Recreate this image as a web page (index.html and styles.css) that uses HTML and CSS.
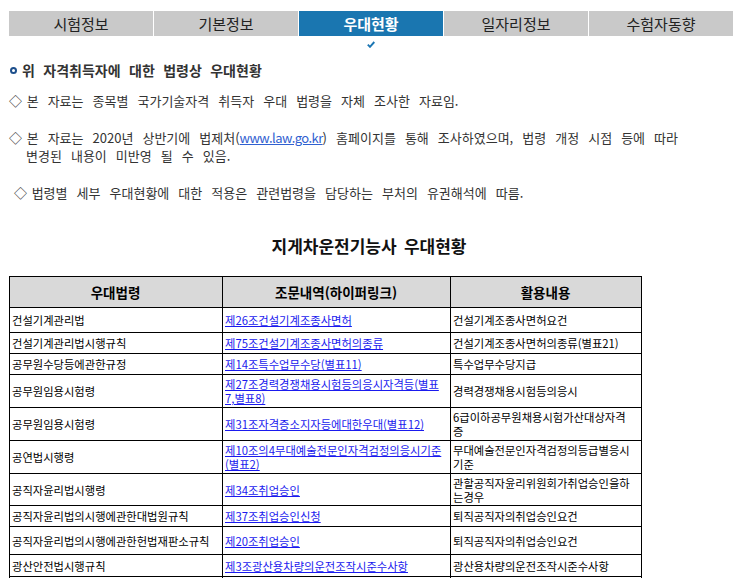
FILE: index.html
```html
<!DOCTYPE html>
<html lang="ko">
<head>
<meta charset="utf-8">
<title>우대현황</title>
<link rel="stylesheet" href="styles.css">
</head>
<body>
<div class="page">
  <nav class="tabs">
    <div class="tab">시험정보</div>
    <div class="tab">기본정보</div>
    <div class="tab active">우대현황
      <svg class="check" width="8" height="7" viewBox="0 0 8 7"><path d="M0.8 3.6 L3 5.8 L7.3 1" fill="none" stroke="#1a75b3" stroke-width="1.9"/></svg>
    </div>
    <div class="tab">일자리정보</div>
    <div class="tab">수험자동향</div>
  </nav>

  <h2 class="heading"><span class="ring"></span>위 자격취득자에 대한 법령상 우대현황</h2>

  <p class="note"><span class="dia">◇ </span>본 자료는 종목별 국가기술자격 취득자 우대 법령을 자체 조사한 자료임.</p>
  <p class="note"><span class="dia">◇ </span>본 자료는 2020년 상반기에 법제처(<a class="ext" href="#">www.law.go.kr</a>) 홈페이지를 통해 조사하였으며, 법령 개정 시점 등에 따라<br><span class="cont">변경된 내용이 미반영 될 수 있음.</span></p>
  <p class="note indent"><span class="dia">◇ </span>법령별 세부 우대현황에 대한 적용은 관련법령을 담당하는 부처의 유권해석에 따름.</p>

  <h3 class="title">지게차운전기능사 우대현황</h3>

  <table class="law">
    <colgroup><col class="c1"><col class="c2"><col class="c3"></colgroup>
    <thead>
      <tr class="hd"><th>우대법령</th><th>조문내역(하이퍼링크)</th><th>활용내용</th></tr>
    </thead>
    <tbody>
      <tr class="h25"><td>건설기계관리법</td><td><a href="#">제26조건설기계조종사면허</a></td><td>건설기계조종사면허요건</td></tr>
      <tr class="h21"><td>건설기계관리법시행규칙</td><td><a href="#">제75조건설기계조종사면허의종류</a></td><td>건설기계조종사면허의종류(별표21)</td></tr>
      <tr class="h21"><td>공무원수당등에관한규정</td><td><a href="#">제14조특수업무수당(별표11)</a></td><td>특수업무수당지급</td></tr>
      <tr class="h33"><td>공무원임용시험령</td><td><a href="#">제27조경력경쟁채용시험등의응시자격등(별표7,별표8)</a></td><td>경력경쟁채용시험등의응시</td></tr>
      <tr class="h33"><td>공무원임용시험령</td><td><a href="#">제31조자격증소지자등에대한우대(별표12)</a></td><td>6급이하공무원채용시험가산대상자격증</td></tr>
      <tr class="h33"><td>공연법시행령</td><td><a href="#">제10조의4무대예술전문인자격검정의응시기준(별표2)</a></td><td>무대예술전문인자격검정의등급별응시기준</td></tr>
      <tr class="h32"><td>공직자윤리법시행령</td><td><a href="#">제34조취업승인</a></td><td>관할공직자윤리위원회가취업승인을하는경우</td></tr>
      <tr class="h21"><td>공직자윤리법의시행에관한대법원규칙</td><td><a href="#">제37조취업승인신청</a></td><td>퇴직공직자의취업승인요건</td></tr>
      <tr class="h28"><td>공직자윤리법의시행에관한헌법재판소규칙</td><td><a href="#">제20조취업승인</a></td><td>퇴직공직자의취업승인요건</td></tr>
      <tr class="h22"><td>광산안전법시행규칙</td><td><a href="#">제3조광산용차량의운전조작시준수사항</a></td><td>광산용차량의운전조작시준수사항</td></tr>
      <tr class="h21"><td>광산안전법시행규칙</td><td><a href="#">제3조광산용차량의운전조작시준수사항</a></td><td>광산용차량의운전조작시준수사항</td></tr>
    </tbody>
  </table>
</div>
</body>
</html>
```
FILE: styles.css
```css
html, body {
  margin: 0;
  padding: 0;
  background: #fff;
}
body {
  font-family: "Noto Sans CJK KR", "Noto Sans", sans-serif;
  color: #222;
}
.page {
  padding: 11px 0 0 9px;
}
.tabs {
  display: grid;
  grid-template-columns: repeat(5, 144px);
  column-gap: 1px;
}
.tab {
  position: relative;
  height: 25px;
  line-height: 25px;
  background: #c9c9c9;
  color: #222;
  text-align: center;
  font-size: 15px;
}
.tab.active {
  background: #1a76b0;
  color: #fff;
  font-weight: bold;
}
.check {
  position: absolute;
  left: 68px;
  top: 30px;
}
.heading {
  margin: 24px 0 0 0;
  font-size: 14px;
  line-height: 20px;
  font-weight: bold;
  color: #333;
  word-spacing: 4.5px;
  display: flex;
  align-items: center;
}
.ring {
  width: 3px;
  height: 3px;
  border: 2px solid #1d4f8c;
  border-radius: 50%;
  margin: 0 5px 0 1px;
}
.note {
  margin: 0;
  font-size: 13px;
  line-height: 18px;
  color: #333;
  word-spacing: 5.4px;
}
.dia {
  word-spacing: 0;
  margin-right: 1px;
}
.heading + .note {
  margin-top: 12px;
}
.note + .note {
  margin-top: 19px;
}
.note.indent {
  padding-left: 5px;
}
.cont {
  padding-left: 17px;
}
.ext {
  color: #3060d0;
  text-decoration: underline;
  word-spacing: 0;
  letter-spacing: -0.6px;
}
.title {
  margin: 33px 0 0 0;
  width: 720px;
  text-align: center;
  font-size: 17px;
  line-height: 22px;
  font-weight: bold;
  color: #111;
  word-spacing: 2.5px;
}
.law {
  margin-top: 19px;
  border-collapse: collapse;
  width: 632px;
  table-layout: fixed;
  font-size: 11.3px;
  color: #000;
}
.c1 { width: 213px; }
.c2 { width: 228px; }
.c3 { width: 191px; }
.law th, .law td {
  border: 1px solid #000;
  padding: 0 3px 0 2px;
  vertical-align: middle;
  line-height: 14px;
}
.law td:last-child {
  padding-right: 7px;
}
.law th {
  background: #d9d9d9;
  font-size: 13.5px;
  font-weight: bold;
  height: 30px;
  text-align: center;
}
.law td {
  text-align: left;
}
.law a {
  color: #1a1aee;
  text-decoration: underline;
}
.h21 td { height: 20px; }
.h22 td { height: 21px; }
.h25 td { height: 24px; }
.h28 td { height: 27px; }
.h32 td { height: 31px; }
.h33 td { height: 32px; }
```
